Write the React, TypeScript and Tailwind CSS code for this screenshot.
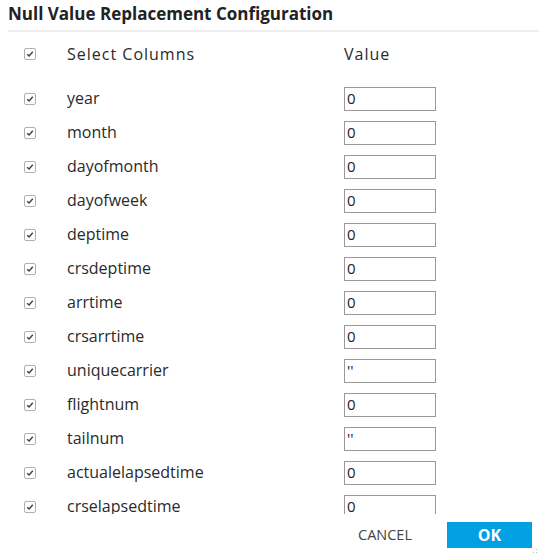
import React from "react";

const rows: [string, string][] = [
  ["year", "0"],
  ["month", "0"],
  ["dayofmonth", "0"],
  ["dayofweek", "0"],
  ["deptime", "0"],
  ["crsdeptime", "0"],
  ["arrtime", "0"],
  ["crsarrtime", "0"],
  ["uniquecarrier", "''"],
  ["flightnum", "0"],
  ["tailnum", "''"],
  ["actualelapsedtime", "0"],
  ["crselapsedtime", "0"],
];

function Check() {
  return (
    <div className="w-[12px] h-[12px] border border-[#b0b0b0] rounded-[2px] bg-white flex items-center justify-center">
      <svg width="8" height="8" viewBox="0 0 8 8">
        <path d="M1.2 4.2 L3.1 6 L6.8 1.8" fill="none" stroke="#444" strokeWidth="1.5" />
      </svg>
    </div>
  );
}

export default function App() {
  return (
    <div
      className="w-[539px] h-[556px] bg-white relative overflow-hidden text-[#2a2a2a]"
      style={{ fontFamily: '"Open Sans", "Noto Sans", sans-serif' }}
    >
      <div className="pl-[8px] pt-[2px] h-[30px] text-[17px] leading-[23px] font-bold text-[#222]">
        Null Value Replacement Configuration
      </div>
      <div className="ml-[8px] h-[2px] bg-[#eeeeee]" />
      <div className="mt-[5px] h-[34px] flex items-center">
        <div className="w-[67px] pl-[24px]">
          <Check />
        </div>
        <div className="w-[277px] text-[16px] tracking-[1px]">Select Columns</div>
        <div className="text-[16px] tracking-[1px]">Value</div>
      </div>
      <div className="mt-[10px] h-[433px] overflow-hidden">
        {rows.map(([name, val]) => (
          <div key={name} className="h-[34px] flex items-center">
            <div className="w-[67px] pl-[24px] pt-[1px]">
              <Check />
            </div>
            <div className="w-[277px] text-[16px] leading-[22px]">{name}</div>
            <div className="w-[92px] h-[24px] mt-[1px] border border-[#999] bg-white pl-[2px] text-[15px] leading-[21px] text-[#222]">
              {val}
            </div>
          </div>
        ))}
      </div>
      <div className="mt-[8px] flex items-center">
        <div className="ml-[358px] w-[89px] text-[14.5px] text-[#444]">CANCEL</div>
        <div className="w-[85px] h-[26px] bg-[#00a0e3] text-white font-bold text-[16px] flex items-center justify-center">
          OK
        </div>
      </div>
      <svg className="absolute right-[1px] bottom-[1px]" width="6" height="6" viewBox="0 0 6 6">
        <rect x="4" y="0" width="1" height="1" fill="#bbb" />
        <rect x="4" y="3" width="1" height="1" fill="#bbb" />
        <rect x="1" y="3" width="1" height="1" fill="#bbb" />
      </svg>
    </div>
  );
}
